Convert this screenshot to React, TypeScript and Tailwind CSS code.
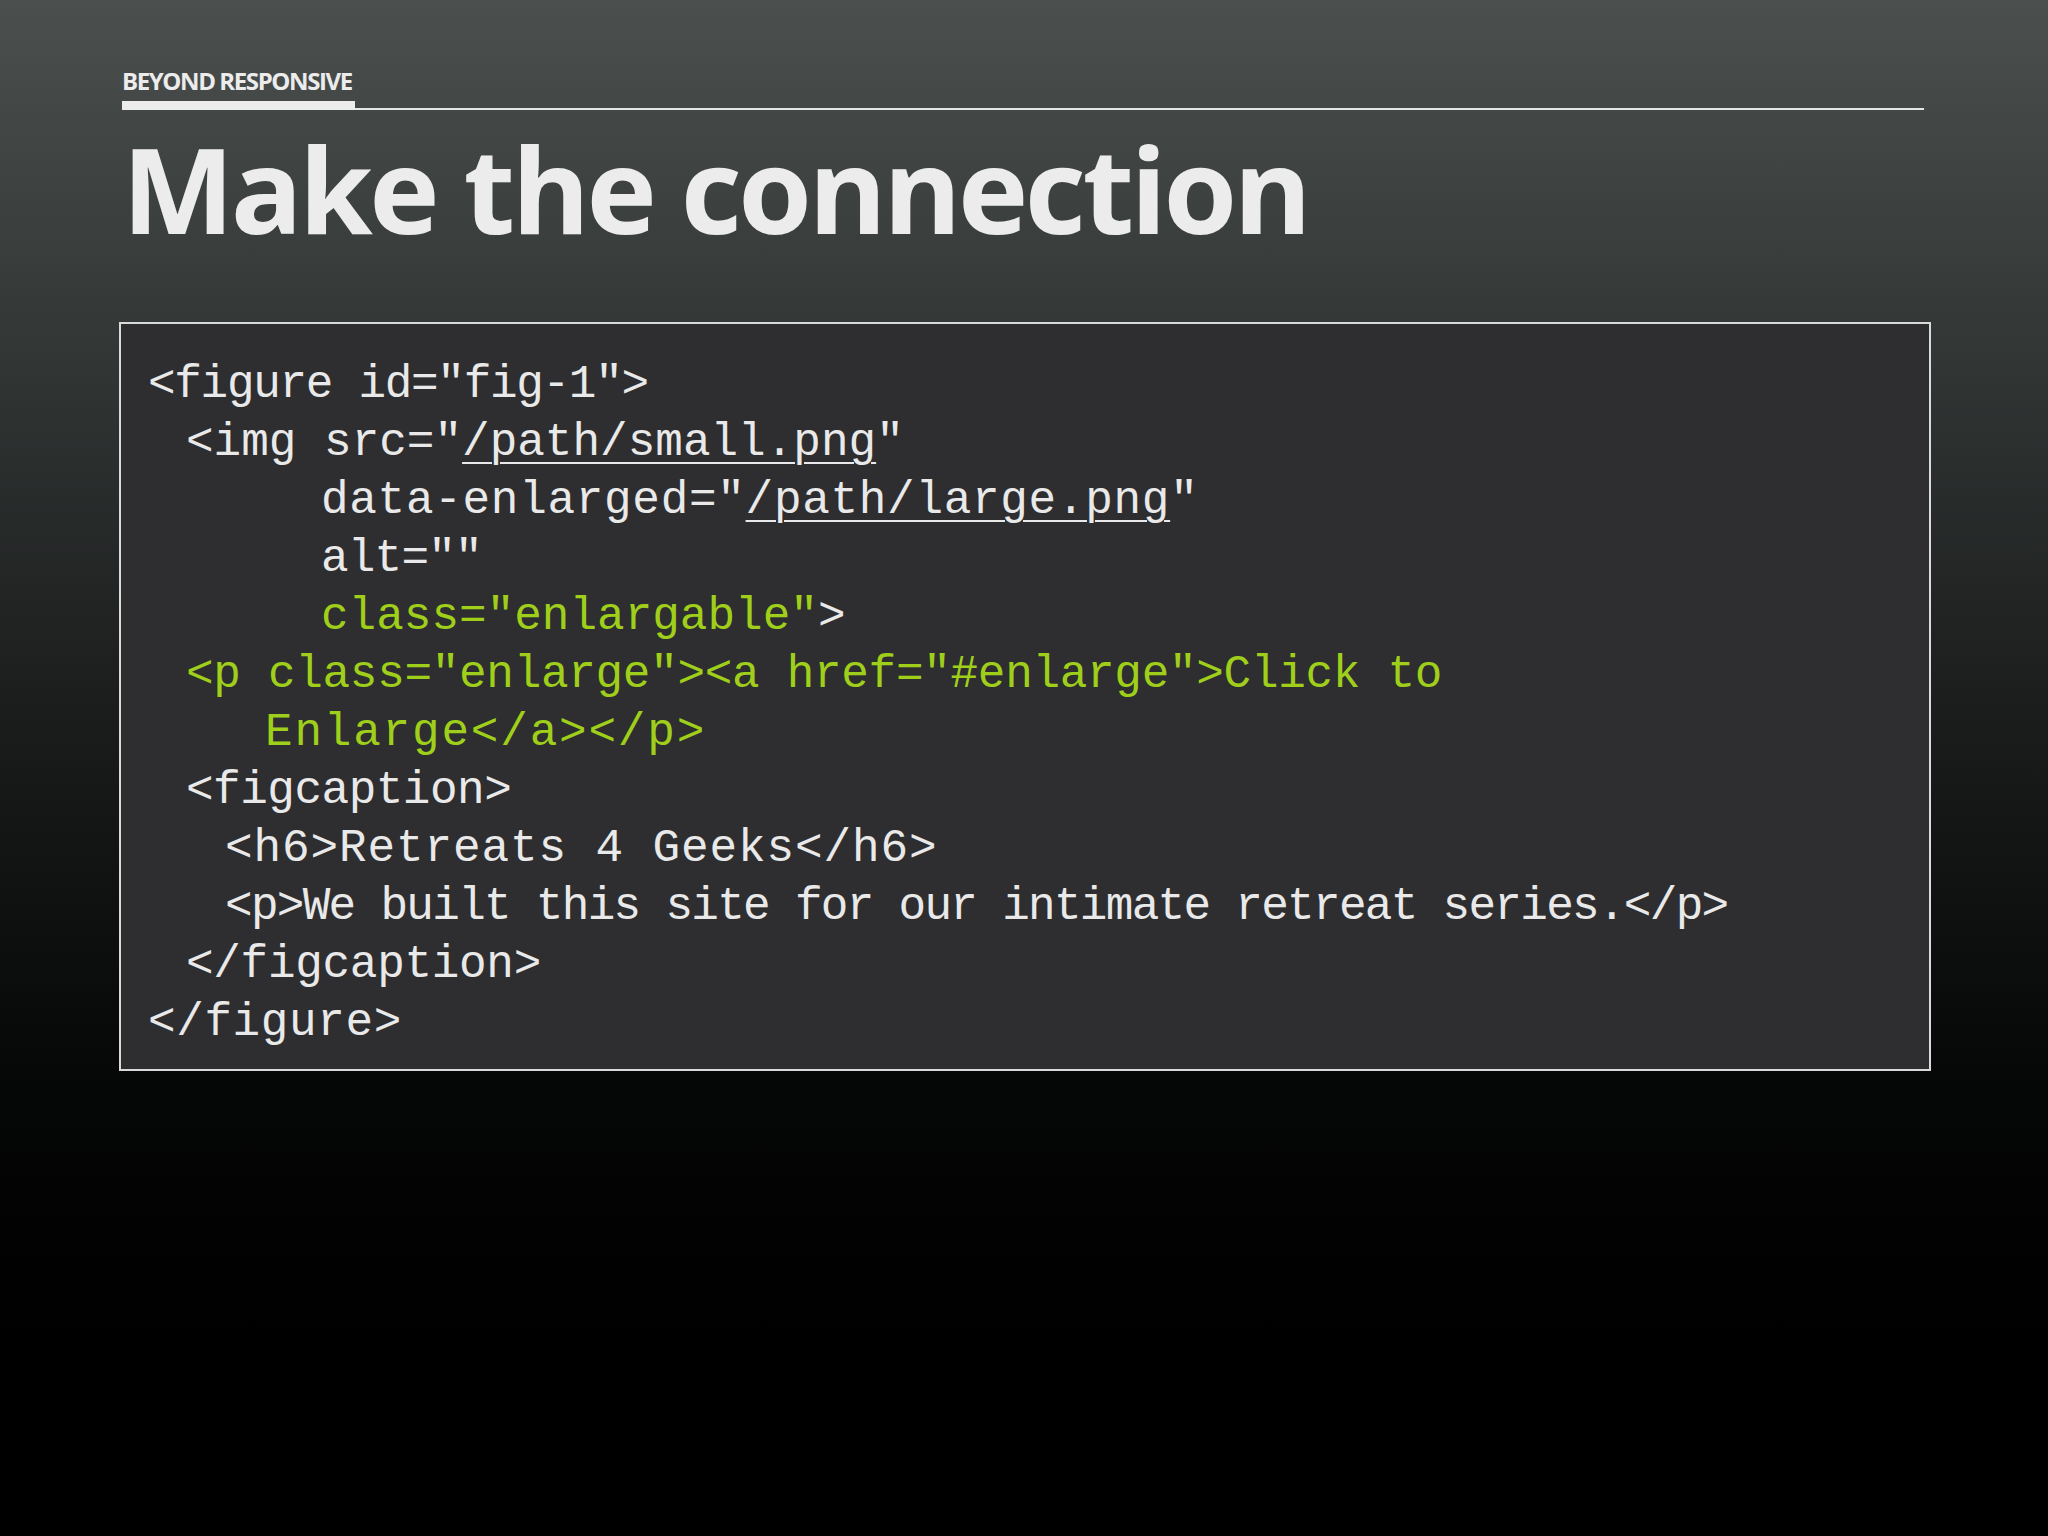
import React from 'react';

type Seg = { t: string; green?: boolean; u?: boolean };

// per-line spacing follows the slide, which squeezes some lines more than others
const lines: { cls: string; segs: Seg[] }[] = [
  { cls: 'pl-0 tracking-[-1.3px]', segs: [{ t: '<figure id="fig-1">' }] },
  { cls: 'pl-[38px] tracking-[0px]', segs: [{ t: '<img src="' }, { t: '/path/small.png', u: true }, { t: '"' }] },
  { cls: 'pl-[173px] tracking-[0.7px]', segs: [{ t: 'data-enlarged="' }, { t: '/path/large.png', u: true }, { t: '"' }] },
  { cls: 'pl-[173px] tracking-[-0.8px]', segs: [{ t: 'alt=""' }] },
  { cls: 'pl-[173px] tracking-[0px]', segs: [{ t: 'class="enlargable"', green: true }, { t: '>' }] },
  { cls: 'pl-[38px] tracking-[-0.3px]', segs: [{ t: '<p class="enlarge"><a href="#enlarge">Click to', green: true }] },
  { cls: 'pl-[117px] tracking-[1.8px]', segs: [{ t: 'Enlarge</a></p>', green: true }] },
  { cls: 'pl-[38px] tracking-[-0.5px]', segs: [{ t: '<figcaption>' }] },
  { cls: 'pl-[77px] tracking-[0.9px]', segs: [{ t: '<h6>Retreats 4 Geeks</h6>' }] },
  { cls: 'pl-[77px] tracking-[-1.7px]', segs: [{ t: '<p>We built this site for our intimate retreat series.</p>' }] },
  { cls: 'pl-[38px] tracking-[-0.3px]', segs: [{ t: '</figcaption>' }] },
  { cls: 'pl-0 tracking-[0.6px]', segs: [{ t: '</figure>' }] },
];

export default function App() {
  return (
    <div className="w-[2048px] h-[1536px] overflow-hidden bg-gradient-to-b from-[#4b504f] to-[#000000]">
      <div className="pl-[122px] pr-[124px] pt-[67px]">
        {/* kicker */}
        <div className="flex items-end">
          <div className="flex flex-col">
            <span className="font-['Open_Sans','Liberation_Sans',sans-serif] font-bold text-[24px] leading-[28px] tracking-[-1.4px] text-[#ececec] whitespace-nowrap">
              BEYOND RESPONSIVE
            </span>
            <div className="mt-[6px] h-[9px] w-[233px] bg-[#ececec]" />
          </div>
          <div className="flex-1 h-[2px] bg-[#e6e6e6]" />
        </div>

        {/* title */}
        <h1 className="mt-[8px] font-['Open_Sans','Liberation_Sans',sans-serif] font-bold text-[119px] leading-[140px] tracking-[-3.5px] text-[#ececec] whitespace-nowrap">
          Make the connection
        </h1>
      </div>

      {/* code panel */}
      <div className="mt-[64px] ml-[119px] w-[1812px] h-[749px] border-2 border-[#dadada] bg-[#2e2e30] pt-[32px] pl-[27px]">
        <div className="font-['Liberation_Mono','DejaVu_Sans_Mono',monospace] text-[46px] leading-[58px] text-[#e9e9e9]">
          {lines.map((ln, i) => (
            <div key={i} className={`${ln.cls} whitespace-pre`}>
              {ln.segs.map((s, j) => (
                <span
                  key={j}
                  className={`${s.green ? 'text-[#9fcf1b]' : ''} ${s.u ? 'underline decoration-2 underline-offset-[7px]' : ''}`}
                >
                  {s.t}
                </span>
              ))}
            </div>
          ))}
        </div>
      </div>
    </div>
  );
}
